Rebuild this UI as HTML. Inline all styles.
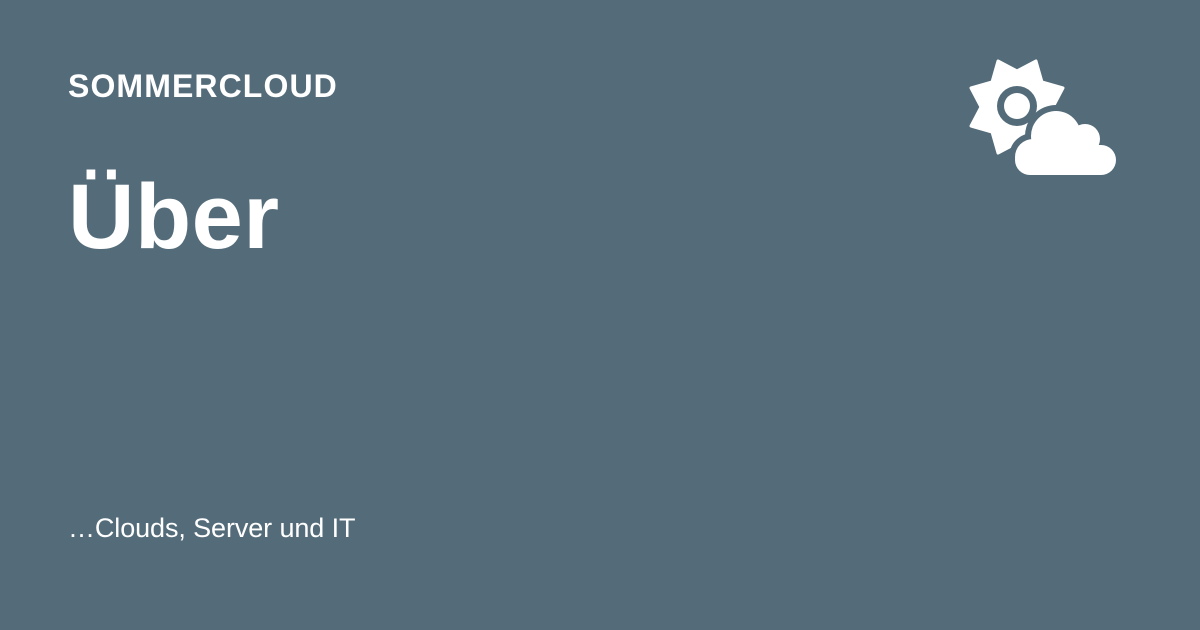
<!DOCTYPE html>
<html><head><style>
body{margin:0;width:1200px;height:630px;background:#546c7a;overflow:hidden;position:relative;font-family:"Liberation Sans",sans-serif;color:#fff}
.t{position:absolute;left:68px;white-space:nowrap}
</style></head><body>
<div class="t" style="top:68px;font-size:32px;font-weight:bold;letter-spacing:1.1px">SOMMERCLOUD</div>
<div class="t" style="top:165px;font-size:92px;font-weight:bold;letter-spacing:0.5px">Über</div>
<div class="t" style="top:513px;font-size:27px;letter-spacing:-0.1px">…Clouds, Server und IT</div>
<svg style="position:absolute;left:0;top:0" width="1200" height="630">
<polygon fill="#fff" stroke="#fff" stroke-width="3" stroke-linejoin="round" points="998,61 1017,71 1036,61 1042,82 1063,88 1053,107 1063,126 1042,132 1036,153 1017,143 998,153 992,132 971,126 981,107 971,88 992,82"/>
<circle cx="1017" cy="106" r="20" fill="#546c7a"/>
<circle cx="1017" cy="106" r="13" fill="#fff"/>
<g fill="#546c7a">
<circle cx="1056" cy="136" r="31"/><circle cx="1085" cy="139" r="21"/><circle cx="1033" cy="157" r="24"/><rect x="1008" y="140" width="116" height="42" rx="21"/>
</g>
<g fill="#fff">
<circle cx="1056" cy="136" r="25"/><circle cx="1085" cy="139" r="15"/><circle cx="1033" cy="157" r="18"/><rect x="1015" y="145" width="101" height="30" rx="15"/>
</g>
</svg>
</body></html>
